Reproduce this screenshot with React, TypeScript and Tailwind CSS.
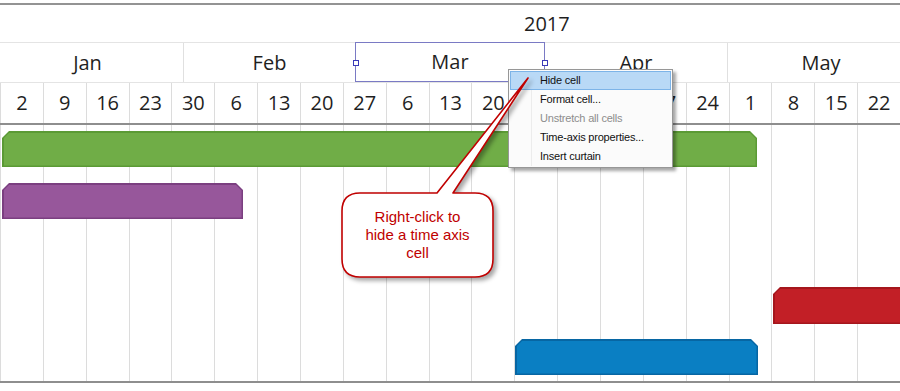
import React from "react";

const weeks = ["2", "9", "16", "23", "30", "6", "13", "20", "27", "6", "13", "20", "27", "3", "10", "17", "24", "1", "8", "15", "22"];

const menuItems = [
  { label: "Hide cell", active: true },
  { label: "Format cell..." },
  { label: "Unstretch all cells", disabled: true },
  { label: "Time-axis properties..." },
  { label: "Insert curtain" },
];

function Bar({ left, width, fill, edge, chamferRight = true, className = "" }: { left: number; width: number; fill: string; edge: string; chamferRight?: boolean; className?: string }) {
  const outer = chamferRight
    ? "[clip-path:polygon(7px_0,calc(100%_-_7px)_0,100%_7px,100%_100%,0_100%,0_7px)]"
    : "[clip-path:polygon(7px_0,100%_0,100%_100%,0_100%,0_7px)]";
  const inner = chamferRight
    ? "[clip-path:polygon(6px_0,calc(100%_-_6px)_0,100%_6px,100%_100%,0_100%,0_6px)]"
    : "[clip-path:polygon(6px_0,100%_0,100%_100%,0_100%,0_6px)]";
  return (
    <div className={`h-[36px] p-[1.5px] ${outer} ${className}`} style={{ marginLeft: left, width, background: edge }}>
      <div className={`h-full w-full ${inner}`} style={{ background: fill }} />
    </div>
  );
}

export default function App() {
  return (
    <div className="relative w-[900px] h-[391px] overflow-hidden bg-white font-['Open_Sans',sans-serif] text-[#1f1f1f]">
      <div className="h-[3px]" />
      {/* year */}
      <div className="h-[39px] border-t-2 border-[#939393] flex items-center pl-[524px] text-[20px]">2017</div>
      {/* months */}
      <div className="h-[40px] border-t border-[#e4e4e4] flex text-[20px]">
        <div className="w-[184px] flex items-center justify-center pl-[-6px] border-r border-[#e0e0e0]">
          <span className="mr-[8px]">Jan</span>
        </div>
        <div className="w-[171px] flex items-center justify-center">Feb</div>
        <div className="relative w-[190px] flex items-center justify-center border border-[#7a7ac4] -mt-px">
          Mar
          <span className="absolute left-[-3px] top-[17px] w-[6px] h-[6px] bg-white border border-[#3a3ab8]" />
          <span className="absolute right-[-4px] top-[17px] w-[6px] h-[6px] bg-white border border-[#3a3ab8]" />
        </div>
        <div className="w-[183px] flex items-center justify-center border-r border-[#e0e0e0]">Apr</div>
        <div className="flex-1 flex items-center justify-center pr-[-10px]">
          <span className="mr-[-14px]">May</span>
        </div>
      </div>
      {/* weeks */}
      <div className="h-[41px] border-t border-[#e4e4e4] grid grid-cols-[repeat(21,minmax(0,1fr))] text-[20px]">
        {weeks.map((w, i) => (
          <div key={i} className="flex items-center justify-center border-l border-[#dcdcdc]">{w}</div>
        ))}
      </div>
      {/* body */}
      <div className="relative h-[260px] border-t-2 border-b-2 border-[#8e8e8e]">
        <div className="absolute inset-0 grid grid-cols-[repeat(21,minmax(0,1fr))]">
          {weeks.map((_, i) => (
            <div key={i} className="border-l border-[#dcdcdc]" />
          ))}
        </div>
        <div className="relative flex flex-col pt-[6px]">
          <Bar left={2} width={755} fill="#70ad47" edge="#5b9a35" />
          <Bar left={2} width={241} fill="#97579b" edge="#7b3f80" className="mt-[16px]" />
          <Bar left={773} width={140} fill="#c21f26" edge="#a5161c" chamferRight={false} className="mt-[68px] !h-[37px]" />
          <Bar left={515} width={243} fill="#0a7fc3" edge="#0766a3" className="mt-[15px]" />
        </div>
      </div>

      {/* context menu */}
      <div className="absolute left-[508px] top-[69px] w-[165px] border border-[#979797] bg-[#fbfbfb] p-px shadow-[3px_3px_3px_rgba(0,0,0,0.35)] font-['Liberation_Sans',sans-serif] text-[11px] tracking-[-0.2px]">
        <div className="absolute left-[22px] top-px bottom-px w-px bg-[#ececec]" />
        {menuItems.map((m) => (
          <div
            key={m.label}
            className={`relative h-[19px] flex items-center pl-[29px] border ${m.active ? "bg-[#b9d9f6] border-[#7db4e8]" : "border-transparent"} ${m.disabled ? "text-[#8d8d8d]" : "text-[#111]"}`}
          >
            {m.label}
          </div>
        ))}
      </div>

      {/* callout */}
      <svg className="absolute left-0 top-0 drop-shadow-[3px_3px_2px_rgba(0,0,0,0.35)]" width="900" height="391" viewBox="0 0 900 391">
        <path
          d="M360 193 L437 193 L528 78 L453 193 L475 193 Q493 193 493 211 L493 259 Q493 277 475 277 L360 277 Q342 277 342 259 L342 211 Q342 193 360 193 Z"
          fill="#ffffff"
          stroke="#c00000"
          strokeWidth="1.6"
          strokeLinejoin="round"
        />
      </svg>
      <div className="absolute left-[342px] top-[193px] w-[151px] h-[84px] flex items-center justify-center text-center font-['Liberation_Sans',sans-serif] text-[15px] leading-[18px] text-[#c00000]">
        Right-click to<br />hide a time axis<br />cell
      </div>
    </div>
  );
}
